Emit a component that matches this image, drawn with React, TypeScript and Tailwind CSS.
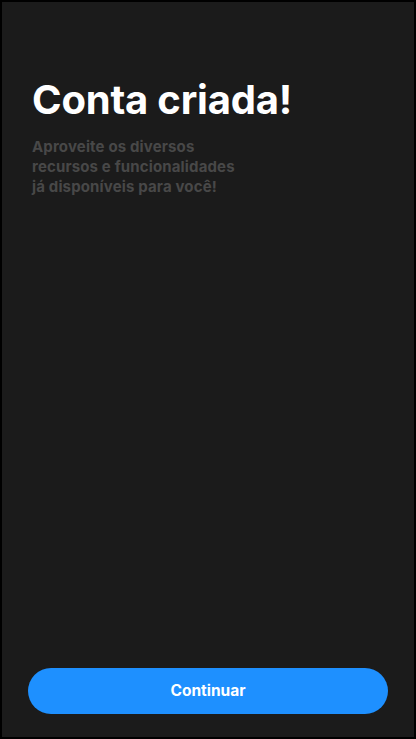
export default function App() {
  return (
    <div className="h-[739px] w-[416px] border-2 border-black bg-[#1b1b1b] font-['Inter',sans-serif] flex flex-col">
      <div className="px-[30px] pt-[73px]">
        <h1 className="text-[40px] font-bold leading-[50px] tracking-[-0.005em] text-white">
          Conta criada!
        </h1>
        <p className="mt-[12px] text-[15px] font-bold leading-[20px] tracking-[0.01em] text-[#484848]">
          Aproveite os diversos
          <br />
          recursos e funcionalidades
          <br />
          já disponíveis para você!
        </p>
      </div>
      <div className="mt-auto px-[26px] pb-[23px]">
        <button className="h-[46px] w-full rounded-full bg-[#1e90ff] text-[15.5px] font-bold text-white">
          Continuar
        </button>
      </div>
    </div>
  );
}
